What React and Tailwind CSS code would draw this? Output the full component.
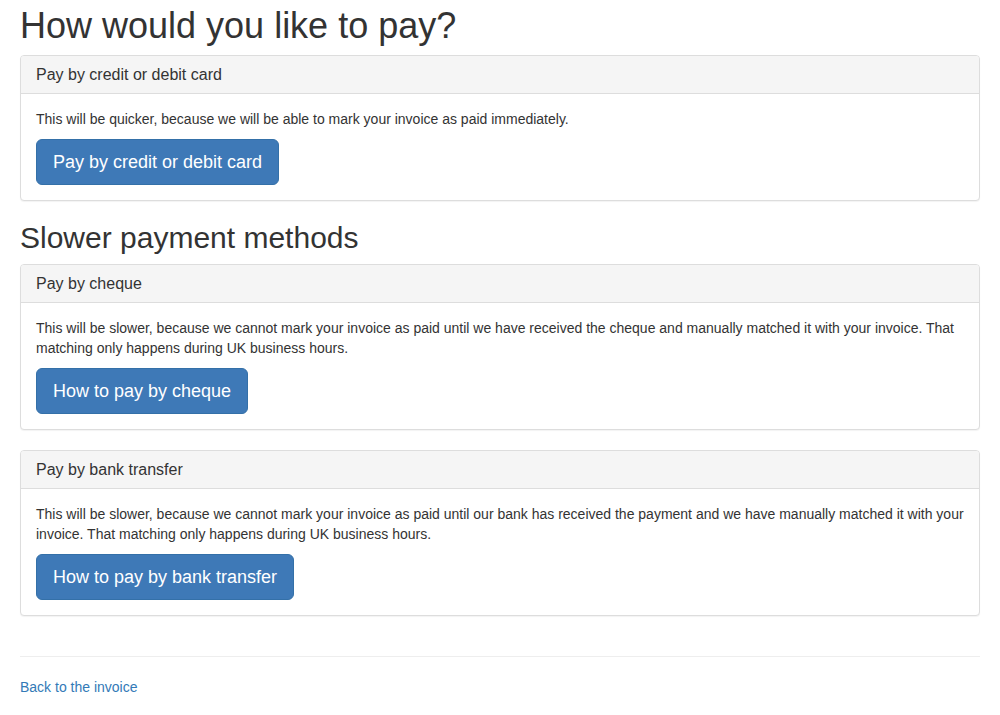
export default function App() {
  const Panel = ({ title, children, button }) => (
    <div className="mb-5 rounded-[4px] border border-[#dddddd] bg-white shadow-[0_1px_1px_rgba(0,0,0,0.05)]">
      <div className="rounded-t-[3px] border-b border-[#dddddd] bg-[#f5f5f5] px-[15px] py-[10px]">
        <h3 className="m-0 text-[16px] leading-[17px] text-[#333333]">{title}</h3>
      </div>
      <div className="p-[15px]">
        <p className="mb-[10px] text-[14px] leading-[20px]">{children}</p>
        <a
          href="#"
          className="inline-block rounded-[6px] border border-[#3470a8] bg-[#3e79b7] px-4 py-[10px] text-[18px] leading-[24px] text-white"
        >
          {button}
        </a>
      </div>
    </div>
  );

  return (
    <div
      className="min-h-screen bg-white px-5 pt-[6px] text-[14px] leading-[20px] text-[#333333]"
      style={{ fontFamily: '"Liberation Sans", Arial, Helvetica, sans-serif' }}
    >
      <h1 className="mb-[10px] text-[36px] font-normal leading-[39px]">How would you like to pay?</h1>
      <Panel title="Pay by credit or debit card" button="Pay by credit or debit card">
        This will be quicker, because we will be able to mark your invoice as paid immediately.
      </Panel>
      <h2 className="mb-[10px] text-[30px] font-normal leading-[33px]">Slower payment methods</h2>
      <Panel title="Pay by cheque" button="How to pay by cheque">
        This will be slower, because we cannot mark your invoice as paid until we have received the cheque and manually matched it with your invoice. That matching only happens during UK business hours.
      </Panel>
      <Panel title="Pay by bank transfer" button="How to pay by bank transfer">
        This will be slower, because we cannot mark your invoice as paid until our bank has received the payment and we have manually matched it with your invoice. That matching only happens during UK business hours.
      </Panel>
      <hr className="mb-5 mt-10 border-0 border-t border-[#eeeeee]" />
      <a href="#" className="text-[14px] leading-[20px] text-[#337ab7]">
        Back to the invoice
      </a>
    </div>
  );
}
